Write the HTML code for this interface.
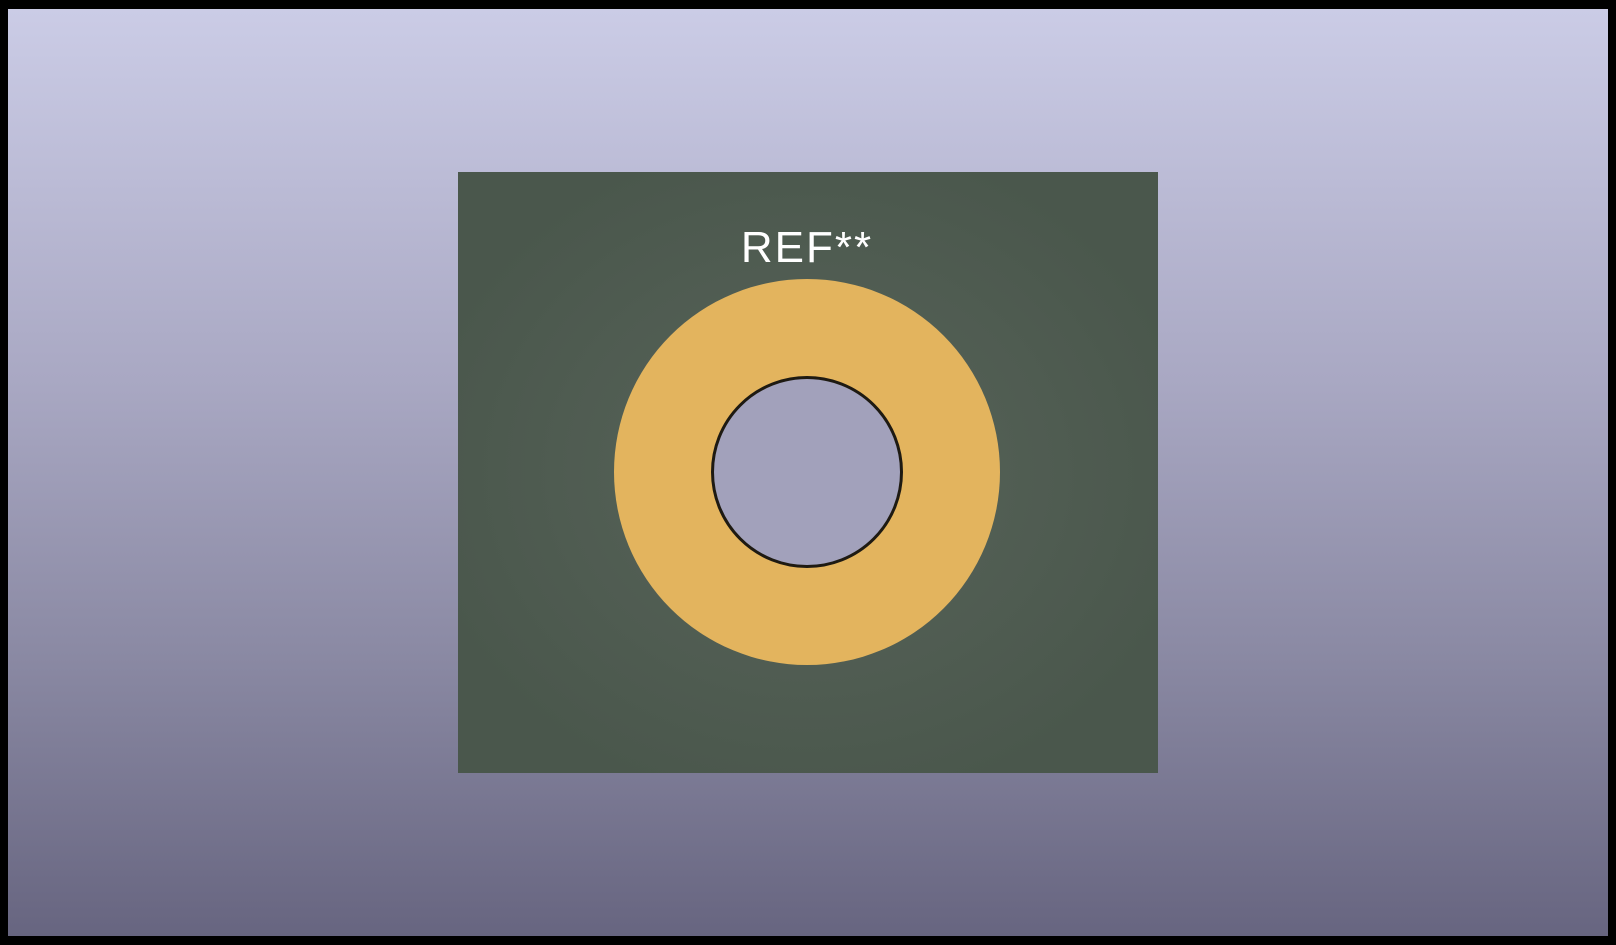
<!DOCTYPE html>
<html><head><style>
html,body{margin:0;padding:0;}
body{width:1616px;height:945px;background:#000;position:relative;overflow:hidden;}
.bg{position:absolute;left:8px;top:9px;width:1600px;height:927px;background:linear-gradient(#cbcce6,#a9a8c3 40%,#8a89a3 70%,#676580);}
.board{position:absolute;left:458px;top:172px;width:700px;height:601px;background:radial-gradient(ellipse at 50% 50%,#58645a,#4a574c 80%);}
.pad{position:absolute;left:614px;top:279px;width:386px;height:386px;border-radius:50%;background:#e3b45e;}
.hole{position:absolute;left:711px;top:376px;width:192px;height:192px;border-radius:50%;box-sizing:border-box;border:3px solid #1e1a12;background:#a2a1bb;}
.t{position:absolute;left:732px;top:223px;width:150px;text-align:center;color:#fff;font:44px "Liberation Sans",sans-serif;letter-spacing:2px;}
</style></head><body>
<div class="bg"></div>
<div class="board"></div>
<div class="pad"></div>
<div class="hole"></div>
<div class="t">REF**</div>
</body></html>
